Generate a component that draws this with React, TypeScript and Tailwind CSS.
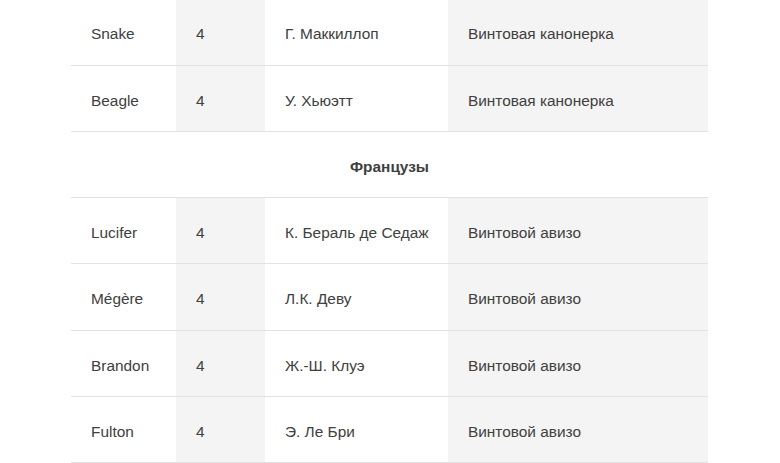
import React from 'react';

interface Ship {
  name: string;
  guns: number;
  captain: string;
  type: string;
}

const british: Ship[] = [
  { name: 'Snake', guns: 4, captain: 'Г. Маккиллоп', type: 'Винтовая канонерка' },
  { name: 'Beagle', guns: 4, captain: 'У. Хьюэтт', type: 'Винтовая канонерка' },
];

const french: Ship[] = [
  { name: 'Lucifer', guns: 4, captain: 'К. Бераль де Седаж', type: 'Винтовой авизо' },
  { name: 'Mégère', guns: 4, captain: 'Л.К. Деву', type: 'Винтовой авизо' },
  { name: 'Brandon', guns: 4, captain: 'Ж.-Ш. Клуэ', type: 'Винтовой авизо' },
  { name: 'Fulton', guns: 4, captain: 'Э. Ле Бри', type: 'Винтовой авизо' },
];

function ShipRow({ ship }: { ship: Ship }) {
  return (
    <tr className="border-b border-[#e2e2e2] h-[66.3px]">
      <td className="pl-5 pr-2 pt-1">{ship.name}</td>
      <td className="pl-5 pr-2 pt-1 bg-[#f4f4f4]">{ship.guns}</td>
      <td className="pl-5 pr-1 pt-1">{ship.captain}</td>
      <td className="pl-5 pr-2 pt-1 bg-[#f4f4f4]">{ship.type}</td>
    </tr>
  );
}

export default function App() {
  return (
    <div
      className="w-[780px] h-[463px] overflow-hidden bg-white text-[15.4px] text-[#404040] whitespace-nowrap"
      style={{ fontFamily: '"Liberation Sans", Arial, sans-serif' }}
    >
      <table className="ml-[71px] -mt-[1.3px] w-[637px] border-collapse table-fixed">
        <colgroup>
          <col className="w-[105px]" />
          <col className="w-[89px]" />
          <col className="w-[183px]" />
          <col className="w-[260px]" />
        </colgroup>
        <tbody>
          {british.map((s) => (
            <ShipRow key={s.name} ship={s} />
          ))}
          <tr className="border-b border-[#e2e2e2] h-[66.3px]">
            <td colSpan={4} className="pt-1 text-center font-bold">
              Французы
            </td>
          </tr>
          {french.map((s) => (
            <ShipRow key={s.name} ship={s} />
          ))}
        </tbody>
      </table>
    </div>
  );
}
